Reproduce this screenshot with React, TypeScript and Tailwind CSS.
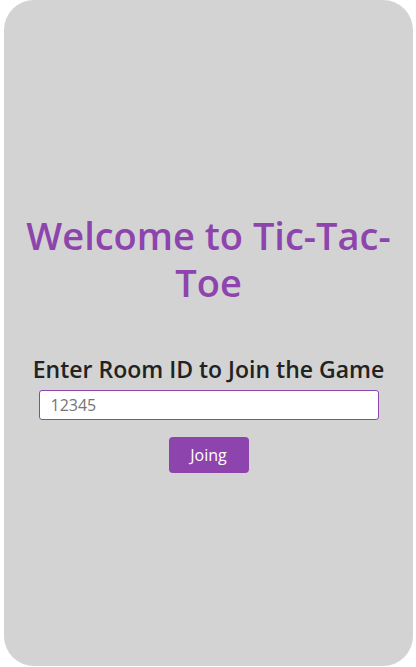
export default function App() {
  return (
    <div className="bg-white w-[416px] h-[667px]">
      <div
        className="ml-[4px] w-[409px] h-[666px] bg-[#d3d3d3] rounded-[30px] flex flex-col items-center pt-[212px]"
        style={{ fontFamily: '"Open Sans", "Noto Sans", sans-serif' }}
      >
        {/* Titel */}
        <h1 className="text-[38px] leading-[47px] font-semibold text-[#8e44ad] text-center px-5">
          Welcome to Tic-Tac-Toe
        </h1>

        <h2 className="mt-[49px] text-[23px] leading-[28px] font-semibold text-[#222] text-center">
          Enter Room ID to Join the Game
        </h2>

        <input
          type="text"
          placeholder="12345"
          className="mt-[7px] w-[340px] h-[30px] bg-white border border-[#8e44ad] rounded-[3px] px-[11px] text-[16px] text-[#333] placeholder:text-[#757575] outline-none"
        />

        <button className="mt-[17px] w-[80px] h-[36px] bg-[#8e44ad] text-white text-[16px] rounded-[4px]">
          Joing
        </button>
      </div>
    </div>
  );
}
